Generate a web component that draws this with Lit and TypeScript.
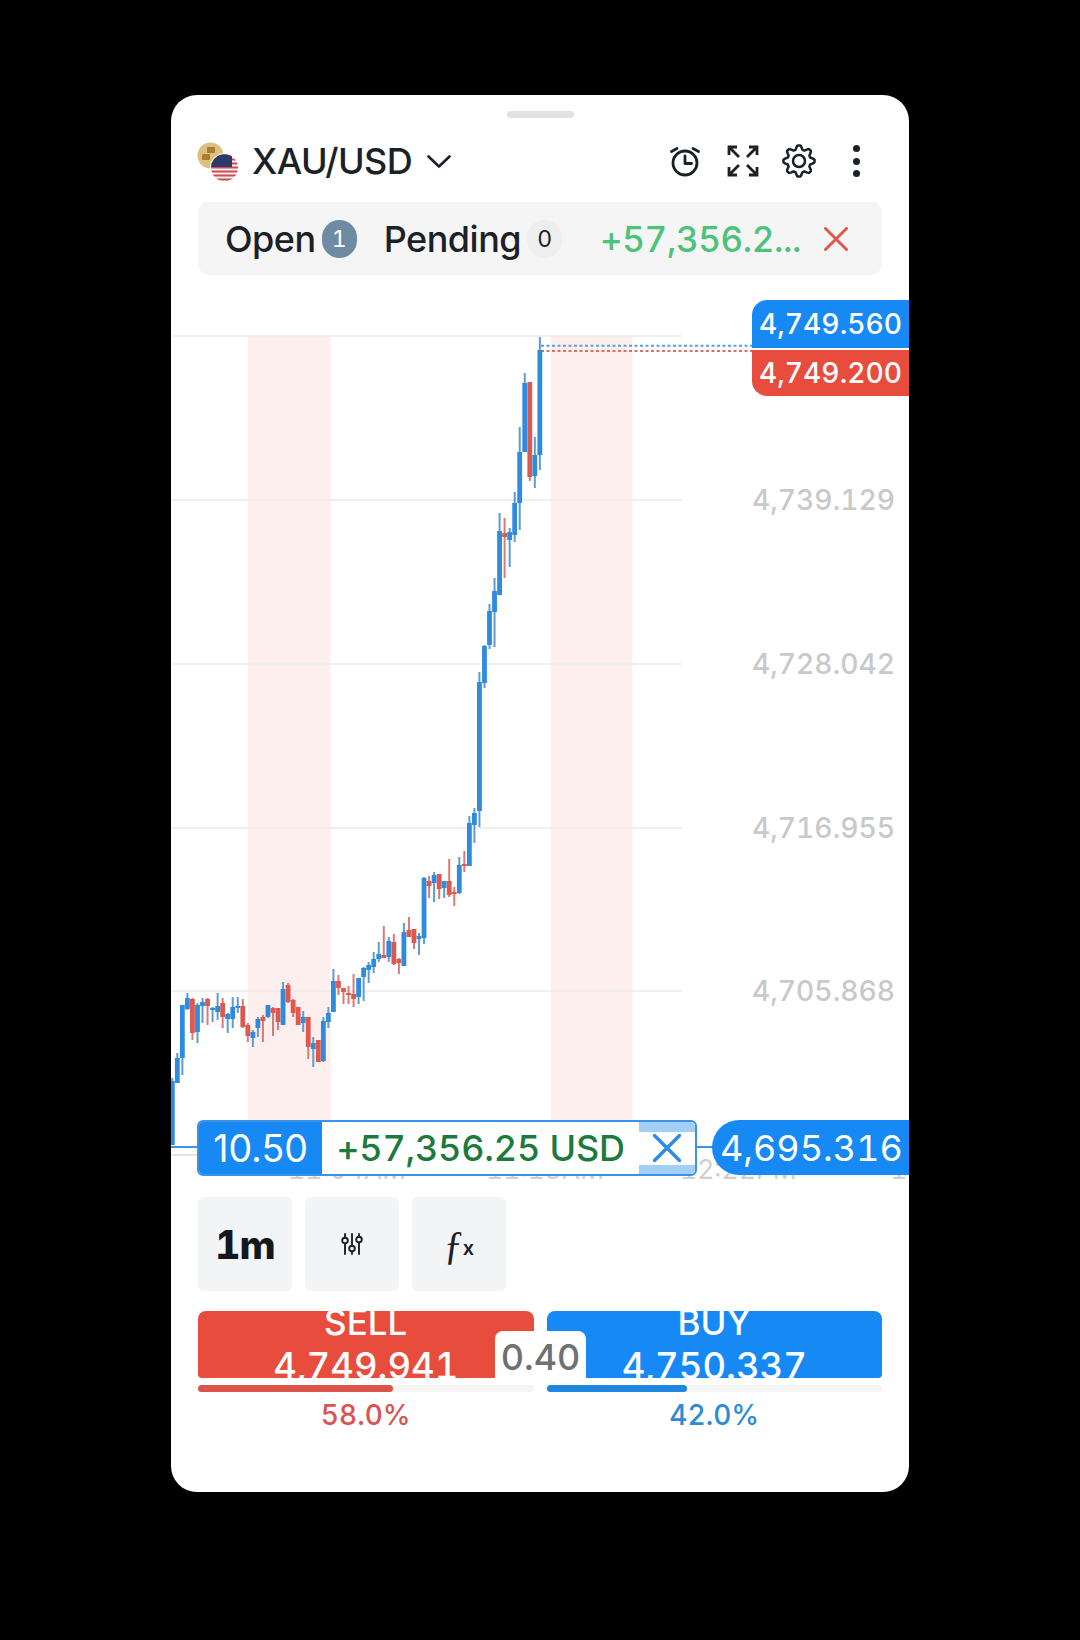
import { LitElement, html, svg, css } from 'lit';
import { customElement } from 'lit/decorators.js';

// wick top, body top, body bottom, wick bottom, red?
type Candle = [number, number, number, number, number?];

const CANDLES: Candle[] = [
  [1078, 1081, 1145, 1145], [1053, 1058, 1083, 1083], [1005, 1005, 1058, 1075], [993, 998, 1009, 1010],
  [998, 999, 1033, 1040, 1], [1003, 1005, 1032, 1043], [998, 1002, 1006, 1023], [998, 999, 1006, 1025, 1],
  [1007, 1008, 1010, 1022], [993, 1006, 1012, 1020], [998, 1003, 1017, 1028, 1], [1013, 1014, 1019, 1033],
  [997, 1007, 1019, 1028], [997, 1006, 1007, 1013], [999, 1006, 1027, 1028, 1], [1023, 1025, 1036, 1042, 1],
  [1030, 1032, 1038, 1047], [1017, 1019, 1028, 1037], [1015, 1017, 1021, 1042, 1], [1005, 1005, 1017, 1018],
  [1007, 1008, 1013, 1036, 1], [1008, 1008, 1022, 1030, 1], [982, 989, 1025, 1025], [983, 985, 1002, 1003, 1],
  [999, 1000, 1013, 1017, 1], [1007, 1007, 1025, 1025, 1], [1011, 1017, 1023, 1032], [1017, 1017, 1047, 1059, 1],
  [1037, 1043, 1049, 1067], [1040, 1040, 1062, 1062, 1], [1017, 1021, 1061, 1062], [1007, 1013, 1022, 1028],
  [969, 981, 1012, 1012], [975, 981, 988, 995, 1], [988, 988, 992, 1004, 1], [986, 993, 995, 1004, 1],
  [974, 994, 999, 1007, 1], [978, 978, 997, 1004], [967, 968, 977, 1001], [962, 965, 970, 983],
  [952, 959, 967, 973], [942, 954, 959, 962], [926, 955, 958, 958, 1], [937, 941, 957, 962],
  [934, 942, 964, 965, 1], [958, 959, 963, 974, 1], [923, 932, 966, 966], [917, 930, 937, 937, 1],
  [929, 929, 943, 949, 1], [933, 936, 939, 955], [877, 878, 938, 944], [876, 881, 886, 898, 1],
  [872, 875, 883, 902], [874, 874, 889, 899, 1], [881, 881, 888, 898], [859, 881, 895, 897, 1],
  [887, 892, 893, 906, 1], [857, 865, 893, 894], [851, 864, 865, 872, 1], [816, 823, 866, 866],
  [808, 813, 825, 843], [672, 682, 811, 827], [645, 646, 683, 688], [604, 611, 645, 649],
  [578, 591, 612, 647], [513, 531, 595, 595], [518, 533, 537, 578, 1], [528, 532, 540, 567],
  [492, 503, 535, 542], [427, 452, 503, 530], [373, 383, 452, 452], [382, 382, 477, 481, 1],
  [437, 455, 476, 488], [337, 350, 455, 470],
];

const GRID = [336, 500, 664, 828, 991];
const AXIS = [
  { y: 500, label: '4,739.129' },
  { y: 664, label: '4,728.042' },
  { y: 828, label: '4,716.955' },
  { y: 991, label: '4,705.868' },
];
const TIMES = [
  { x: 288, label: '11:04AM' },
  { x: 486, label: '11:13AM' },
  { x: 680, label: '12:22PM' },
  { x: 890, label: '12:31PM' },
];

// rounded 8-lobe outline for the settings gear
function gearPath() {
  const pts: string[] = [];
  for (let i = 0; i < 160; i++) {
    const a = (i / 160) * Math.PI * 2;
    const wave = Math.max(-0.75, Math.min(0.75, Math.cos(a * 8)));
    const r = 13.6 + wave * 2.6;
    pts.push(`${(17 + r * Math.sin(a)).toFixed(2)} ${(17 - r * Math.cos(a)).toFixed(2)}`);
  }
  return `M${pts.join('L')}Z`;
}

@customElement('app-root')
export class AppRoot extends LitElement {
  renderPairIcon() {
    const stripes = [0, 1, 2, 3, 4, 5, 6];
    return html`<svg class="pair" viewBox="0 0 44 46" width="44" height="46">
      <defs><clipPath id="flag"><circle cx="28.5" cy="29.7" r="13.5"></circle></clipPath></defs>
      <circle cx="14.5" cy="17.5" r="13" fill="#dcc07c"></circle>
      <rect x="11" y="9" width="8" height="6" rx="1" fill="#a97f33"></rect>
      <rect x="6" y="16" width="8" height="6" rx="1" fill="#a97f33"></rect>
      <circle cx="28.5" cy="29.7" r="14.5" fill="#fff"></circle>
      <g clip-path="url(#flag)">
        <rect x="14" y="16" width="30" height="28" fill="#f6f1f1"></rect>
        ${stripes.map(i => svg`<rect x="14" y=${16.5 + i * 4} width="30" height="2" fill="#cf4a55"></rect>`)}
        <rect x="14" y="16" width="22" height="13" fill="#2b3a67"></rect>
      </g>
    </svg>`;
  }

  renderChart() {
    return svg`<svg class="plot" viewBox="171 275 738 922" width="738" height="922">
      <rect x="248" y="336" width="82.5" height="784" fill="#fcefed"></rect>
      <rect x="551" y="336" width="81.5" height="784" fill="#fcefed"></rect>
      ${GRID.map(y => svg`<line x1="171" x2="682" y1=${y} y2=${y} stroke="#ebebeb" stroke-width="1.5"></line>`)}
      <line x1="541" x2="752" y1="345.7" y2="345.7" stroke="#5a9fdc" stroke-width="2" stroke-dasharray="3 2.5"></line>
      <line x1="541" x2="752" y1="351" y2="351" stroke="#d9706b" stroke-width="2" stroke-dasharray="3 2.5"></line>
      ${CANDLES.map(([wt, bt, bb, wb, red], i) => {
        const x = 172.3 + 5.035 * i;
        return svg`
          <line x1=${x} x2=${x} y1=${wt} y2=${wb} stroke=${red ? '#dc7a72' : '#5f9bd2'} stroke-width="2"></line>
          <rect x=${x - 2.4} y=${bt} width="4.8" height=${Math.max(bb - bt, 2)} fill=${red ? '#e0574e' : '#2d8be0'}></rect>`;
      })}
      <line x1="171" x2="198" y1="1147" y2="1147" stroke="#3a93e8" stroke-width="2"></line>
      <line x1="171" x2="198" y1="1155" y2="1155" stroke="#dcdcdc" stroke-width="1.5"></line>
      <line x1="695" x2="714" y1="1147" y2="1147" stroke="#3a93e8" stroke-width="2"></line>
      ${TIMES.map(t => svg`<text class="time" x=${t.x} y="1179">${t.label}</text>`)}
    </svg>`;
  }

  render() {
    return html`
      <div class="card">
        <div class="handle"></div>

        <div class="header">
          ${this.renderPairIcon()}
          <span class="symbol">XAU/USD</span>
          <svg class="chevron" viewBox="0 0 24 13" width="24" height="13">
            <path d="M1.5 1.5 12 11.5 22.5 1.5" fill="none" stroke="#1c2127" stroke-width="2.6" stroke-linecap="round" stroke-linejoin="round"></path>
          </svg>
          <div class="actions">
            <svg class="alarm" viewBox="0 0 32 32" width="32" height="32">
              <g fill="none" stroke="#1c2127" stroke-width="2.8" stroke-linecap="round" stroke-linejoin="round">
                <circle cx="16" cy="18" r="12"></circle>
                <path d="M16 11v7.5h6.5M2.5 6.5 8 3.5M29.5 6.5 24 3.5"></path>
              </g>
            </svg>
            <svg viewBox="0 0 32 32" width="32" height="32">
              <g fill="none" stroke="#1c2127" stroke-width="2.8" stroke-linejoin="miter">
                <path d="M2 10V2h8M2 2l10 10M30 10V2h-8M30 2 20 12M2 22v8h8M2 30l10-10M30 22v8h-8M30 30 20 20"></path>
              </g>
            </svg>
            <svg viewBox="0 0 34 34" width="34" height="34">
              <g fill="none" stroke="#1c2127" stroke-width="2.5" stroke-linejoin="round">
                <path d=${gearPath()}></path>
                <circle cx="17" cy="17" r="6"></circle>
              </g>
            </svg>
            <div class="dots"><i></i><i></i><i></i></div>
          </div>
        </div>

        <div class="tabs">
          <span class="tab">Open</span>
          <span class="badge active">1</span>
          <span class="tab pending">Pending</span>
          <span class="badge">0</span>
          <span class="pnl">+57,356.2...</span>
          <svg class="close-all" viewBox="0 0 24 24" width="24" height="24">
            <path d="M1.5 1.5 22.5 22.5M22.5 1.5 1.5 22.5" stroke="#e0574e" stroke-width="3" stroke-linecap="round"></path>
          </svg>
        </div>

        <div class="chart">
          ${this.renderChart()}
          ${AXIS.map(a => html`<span class="axis" style="top:${a.y - 275}px">${a.label}</span>`)}
          <div class="last ask">4,749.560</div>
          <div class="last bid">4,749.200</div>
          <div class="position">
            <span class="lots">10.50</span>
            <span class="profit">+57,356.25 USD</span>
            <span class="close">
              <svg viewBox="0 0 28 28" width="28" height="28">
                <path d="M1.5 1.5 26.5 26.5M26.5 1.5 1.5 26.5" stroke="#2b8ce6" stroke-width="3.4" stroke-linecap="round"></path>
              </svg>
            </span>
          </div>
          <div class="entry">4,695.316</div>
        </div>

        <div class="tools">
          <div class="tool interval">1m</div>
          <div class="tool">
            <svg viewBox="0 0 22 22" width="22" height="22">
              <g fill="none" stroke="#1c2127" stroke-width="1.9" stroke-linecap="round">
                <path d="M4 1v3.5M4 11v10M11 1v12M11 19v2M18 1v3M18 10v11"></path>
                <circle cx="4" cy="7.5" r="2.8"></circle>
                <circle cx="11" cy="15.5" r="2.8"></circle>
                <circle cx="18" cy="6.5" r="2.8"></circle>
              </g>
            </svg>
          </div>
          <div class="tool fx"><span class="f">ƒ</span><span class="x">x</span></div>
        </div>

        <div class="trade">
          <div class="btn sell"><span class="side">SELL</span><span class="price">4,749.941</span></div>
          <div class="btn buy"><span class="side">BUY</span><span class="price">4,750.337</span></div>
          <div class="spread">0.40</div>
        </div>

        <div class="sentiment">
          <div class="meter">
            <div class="track"><div class="fill red" style="width:58%"></div></div>
            <span class="pct red">58.0%</span>
          </div>
          <div class="meter">
            <div class="track"><div class="fill blue" style="width:42%"></div></div>
            <span class="pct blue">42.0%</span>
          </div>
        </div>
      </div>
    `;
  }

  static styles = css`
    :host {
      display: block;
      width: 1080px;
      height: 1640px;
      box-sizing: border-box;
      padding: 95px 171px 0;
      background: #000;
      font-family: Inter, "Liberation Sans", sans-serif;
      font-variant-numeric: tabular-nums;
      color: #1c2127;
    }

    .card {
      display: flex;
      flex-direction: column;
      height: 1397px;
      background: #fff;
      border-radius: 26px;
      overflow: hidden;
    }

    .handle {
      flex: none;
      align-self: center;
      width: 67px;
      height: 7px;
      margin-top: 16px;
      border-radius: 4px;
      background: #e2e2e2;
    }

    .header {
      flex: none;
      display: flex;
      align-items: center;
      height: 46px;
      margin-top: 20px;
      padding: 0 27px 0 25px;
    }

    .pair {
      flex: none;
    }

    .symbol {
      margin-left: 12px;
      font-size: 36px;
      font-weight: 500;
      letter-spacing: -0.5px;
    }

    .chevron {
      margin-left: 15px;
    }

    .actions {
      display: flex;
      align-items: center;
      margin-left: auto;
      gap: 23px;
    }

    .alarm {
      margin-right: 3px;
    }

    .dots {
      display: flex;
      flex-direction: column;
      gap: 5.5px;
      margin-left: 14px;
      margin-right: 22px;
    }

    .dots i {
      width: 7px;
      height: 7px;
      border-radius: 50%;
      background: #1c2127;
    }

    .tabs {
      flex: none;
      display: flex;
      align-items: center;
      height: 73px;
      margin: 18px 27px 0;
      padding: 0 27px;
      border-radius: 11px;
      background: #f5f5f5;
    }

    .tab {
      font-size: 36px;
      font-weight: 500;
      letter-spacing: -0.5px;
    }

    .pending {
      margin-left: 27px;
    }

    .badge {
      display: flex;
      align-items: center;
      justify-content: center;
      width: 35px;
      height: 38px;
      margin-left: 6px;
      border-radius: 18px;
      background: #eeeeee;
      font-size: 23px;
    }

    .badge.active {
      background: #6f8ba3;
      color: #fff;
    }

    .pnl {
      margin-left: auto;
      font-size: 35px;
      font-weight: 500;
      letter-spacing: -0.4px;
      color: #4cc27a;
    }

    .close-all {
      margin-left: 23px;
      margin-right: 7px;
    }

    .chart {
      flex: none;
      position: relative;
      height: 922px;
      overflow: hidden;
    }

    .plot {
      display: block;
    }

    .time {
      font-size: 26.5px;
      fill: #cfcfcf;
    }

    .axis {
      position: absolute;
      left: 581px;
      transform: translateY(-50%);
      font-size: 28.2px;
      font-weight: 500;
      color: #c9c9c9;
    }

    .last {
      position: absolute;
      left: 581px;
      right: 0;
      display: flex;
      align-items: center;
      padding-left: 7px;
      font-size: 28.2px;
      font-weight: 500;
      color: #fff;
    }

    .ask {
      top: 25px;
      height: 48px;
      border-top-left-radius: 15px;
      background: #1789f5;
    }

    .bid {
      top: 75px;
      height: 46px;
      border-bottom-left-radius: 15px;
      background: #e84c3d;
    }

    .position {
      position: absolute;
      left: 26px;
      top: 845px;
      display: flex;
      width: 500px;
      height: 56px;
      box-sizing: border-box;
      border: 2px solid #3a93e8;
      border-radius: 6px;
      overflow: hidden;
      background: #fff;
    }

    .lots {
      display: flex;
      align-items: center;
      justify-content: center;
      width: 123px;
      background: #1789f5;
      color: #fff;
      font-size: 37.5px;
      font-variant-numeric: normal;
    }

    .profit {
      display: flex;
      align-items: center;
      justify-content: center;
      width: 317px;
      color: #1e7a3c;
      font-size: 36px;
      font-weight: 500;
      letter-spacing: -0.2px;
      white-space: nowrap;
    }

    .close {
      flex: 1;
      display: flex;
      align-items: center;
      justify-content: center;
      background: linear-gradient(#a3cef7 0 10px, #fff 10px 43px, #a3cef7 43px);
    }

    .entry {
      position: absolute;
      left: 541px;
      right: 0;
      top: 845px;
      height: 55px;
      display: flex;
      align-items: center;
      padding-left: 8px;
      border-radius: 28px 0 0 28px;
      background: #1789f5;
      color: #fff;
      font-size: 36px;
    }

    .tools {
      flex: none;
      display: flex;
      gap: 13px;
      padding: 0 27px;
    }

    .tool {
      display: flex;
      align-items: center;
      justify-content: center;
      width: 94px;
      height: 94px;
      border-radius: 6px;
      background: #f3f4f6;
    }

    .interval {
      font-size: 39px;
      font-weight: 800;
      letter-spacing: -1px;
      color: #14181d;
    }

    .f {
      margin-right: -1px;
      font-family: "Liberation Serif", serif;
      font-size: 40px;
    }

    .x {
      margin-top: 8px;
      font-size: 20px;
      font-weight: 600;
    }

    .trade {
      flex: none;
      position: relative;
      display: flex;
      gap: 13px;
      margin: 20px 27px 0;
    }

    .btn {
      flex: 1;
      display: flex;
      flex-direction: column;
      align-items: center;
      height: 67px;
      border-radius: 8px 8px 4px 4px;
      overflow: hidden;
      color: #fff;
    }

    .sell {
      background: #e84c3d;
    }

    .buy {
      background: #1789f5;
    }

    .side {
      margin-top: -5px;
      font-size: 35px;
      font-weight: 500;
      line-height: 33px;
    }

    .price {
      margin-top: 9px;
      font-size: 36.5px;
      font-weight: 500;
      line-height: 37px;
      white-space: nowrap;
    }

    .spread {
      position: absolute;
      left: 297px;
      top: 20px;
      width: 91px;
      height: 48px;
      display: flex;
      align-items: center;
      justify-content: center;
      border-radius: 8px 8px 0 0;
      background: #fff;
      color: #6f7072;
      font-size: 36px;
      font-weight: 500;
      padding-top: 3px;
      box-sizing: border-box;
    }

    .sentiment {
      flex: none;
      display: flex;
      gap: 13px;
      margin: 7px 27px 0;
    }

    .meter {
      flex: 1;
      display: flex;
      flex-direction: column;
      align-items: center;
    }

    .track {
      align-self: stretch;
      height: 7px;
      border-radius: 4px;
      background: #f5f5f5;
    }

    .fill {
      height: 100%;
      border-radius: 4px;
    }

    .fill.red {
      background: #dc5349;
    }

    .fill.blue {
      background: #1f86e0;
    }

    .pct {
      margin-top: 6px;
      font-size: 28px;
      font-weight: 500;
    }

    .pct.red {
      color: #d9534f;
    }

    .pct.blue {
      color: #2d8ad8;
    }
  `;
}
